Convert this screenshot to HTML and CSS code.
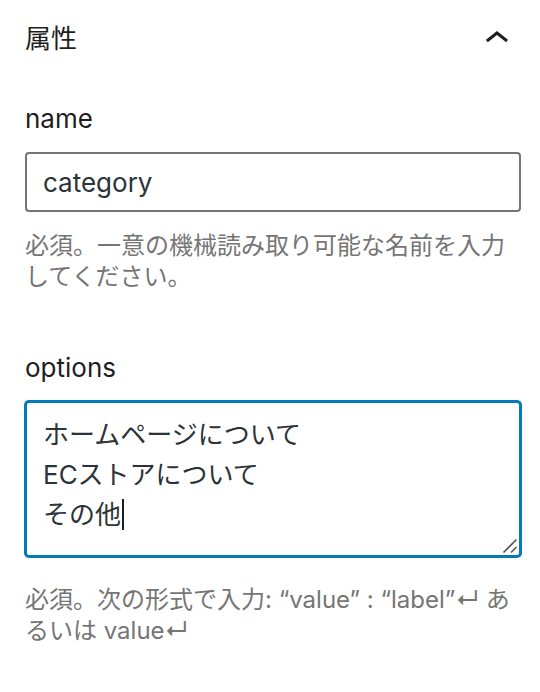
FILE: index.html
```html
<!DOCTYPE html>
<html lang="ja">
<head>
  <meta charset="UTF-8">
  <meta name="viewport" content="width=device-width, initial-scale=1.0">
  <title>属性</title>
  <link rel="stylesheet" href="styles.css">
</head>
<body>

  <div class="panel">
    <!-- Panel header -->
    <div class="panel-header">
      <h2>属性</h2>
      <svg class="toggle" viewBox="0 0 24 24" width="48" height="48" aria-hidden="true">
        <path d="M6.5 12.4L12 8l5.5 4.4-.9 1.2L12 10l-4.6 3.6-1-1.2z"></path>
      </svg>
    </div>

    <!-- name field -->
    <div class="field">
      <label for="name">name</label>
      <input type="text" id="name" value="category">
      <p class="help">必須。一意の機械読み取り可能な名前を入力してください。</p>
    </div>

    <!-- options field (focused, caret after the last line) -->
    <div class="field">
      <label for="options">options</label>
      <div class="textarea is-focused" id="options" role="textbox" aria-multiline="true">
        <div>ホームページについて</div>
        <div>ECストアについて</div>
        <div>その他<span class="caret"></span></div>
        <svg class="grip" viewBox="0 0 16 16" width="16" height="16" aria-hidden="true">
          <path d="M1.5 14.5L14.5 1.5M9 14.5L14.5 9"></path>
        </svg>
      </div>
      <p class="help help-spaced">必須。次の形式で入力: “value” : “label”↵ あるいは value↵</p>
    </div>
  </div>

</body>
</html>
```

FILE: styles.css
```css
/* General Reset */
* {
  margin: 0;
  padding: 0;
  box-sizing: border-box;
}

body {
  font-family: Inter, "Noto Sans CJK JP", sans-serif;
  background-color: #fff;
  color: #1e1e1e;
}

.panel {
  padding: 15px 19px 0 25px;
}

/* Header */
.panel-header {
  display: flex;
  align-items: center;
  justify-content: space-between;
  height: 48px;
}

.panel-header h2 {
  font-size: 26px;
  font-weight: 400;
  line-height: 36px;
}

.toggle {
  fill: #1e1e1e;
}

/* Fields */
.field {
  margin-top: 38px;
}

.field + .field {
  margin-top: 58px;
}

label {
  display: block;
  font-size: 26px;
  line-height: 36px;
  margin-bottom: 15px;
}

input, .textarea {
  display: block;
  width: 100%;
  font-family: inherit;
  font-size: 26px;
  color: #2c3338;
  border: 2px solid #757575;
  border-radius: 4px;
  padding: 12px 16px;
  background: #fff;
}

input {
  height: 60px;
}

.textarea {
  position: relative;
  height: 156px;
  line-height: 40px;
}

.textarea.is-focused {
  border-color: #007cba;
  box-shadow: 0 0 0 1px #007cba;
}

.caret {
  display: inline-block;
  width: 2px;
  height: 31px;
  margin-left: 1px;
  vertical-align: -6px;
  background-color: #1e1e1e;
}

.grip {
  position: absolute;
  right: 1px;
  bottom: 1px;
  stroke: #555;
  stroke-width: 1.6;
  fill: none;
}

.help {
  margin-top: 18px;
  font-size: 24px;
  line-height: 31px;
  color: #757575;
}

.help-spaced {
  margin-top: 27px;
}
```
